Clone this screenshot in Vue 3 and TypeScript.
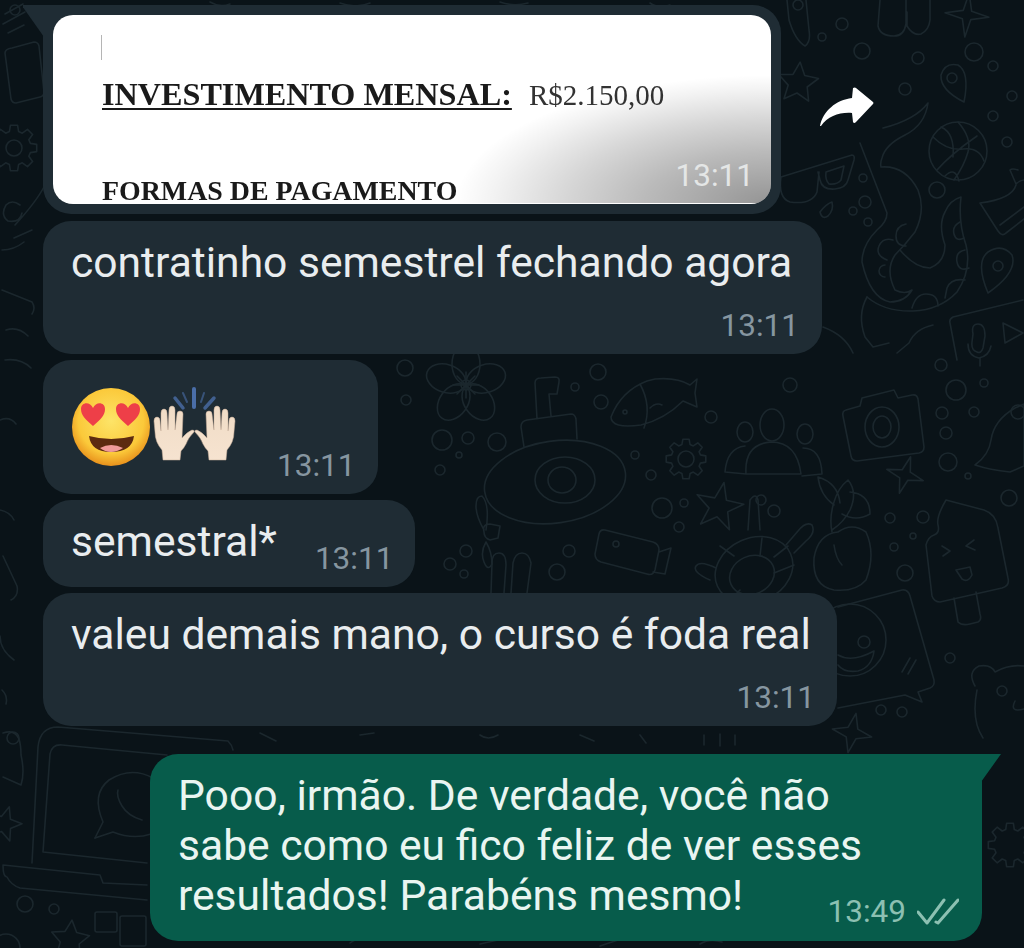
<script setup lang="ts">
interface TextMsg {
  id: number;
  text: string;
  time: string;
  cls: string;
}

const received: TextMsg[] = [
  { id: 1, text: "semestral*", time: "13:11", cls: "inline" },
  { id: 2, text: "valeu demais mano, o curso é foda real", time: "13:11", cls: "stacked wide" },
];

const sentLines: string[] = [
  "Pooo, irmão. De verdade, você não",
  "sabe como eu fico feliz de ver esses",
  "resultados! Parabéns mesmo!",
];

// doodle helpers, the wallpaper is all thin outlines
const starPath = (cx: number, cy: number, R: number, r: number, n: number, rot = 0): string => {
  let d = "";
  for (let i = 0; i < n * 2; i++) {
    const rad = i % 2 ? r : R;
    const a = rot + (Math.PI * i) / n - Math.PI / 2;
    d += `${i ? "L" : "M"}${(cx + rad * Math.cos(a)).toFixed(1)} ${(cy + rad * Math.sin(a)).toFixed(1)}`;
  }
  return d + "Z";
};

const gearPath = (cx: number, cy: number, r1: number, r2: number, n: number): string => {
  let d = "";
  for (let i = 0; i < n; i++) {
    const a = (Math.PI * 2 * i) / n;
    const w = Math.PI / n / 2;
    const pts = [
      [r1, a - w * 1.4],
      [r2, a - w * 0.8],
      [r2, a + w * 0.8],
      [r1, a + w * 1.4],
    ];
    for (const [rad, t] of pts) {
      d += `${d ? "L" : "M"}${(cx + rad * Math.cos(t)).toFixed(1)} ${(cy + rad * Math.sin(t)).toFixed(1)}`;
    }
  }
  return d + "Z";
};

const stars: string[] = [
  starPath(719, 507, 25, 10, 5, 0.2),
  starPath(905, 475, 19, 6, 4, 0.3),
  starPath(798, 83, 21, 10, 5, 0.1),
  starPath(967, 15, 22, 6, 4, 0.1),
  starPath(852, 733, 20, 7, 4, 0.2),
  starPath(4, 824, 18, 8, 5, 0.3),
  starPath(70, 940, 20, 10, 5, 0.1),
];

const gears: string[] = [
  gearPath(686, 459, 15, 20, 8),
  gearPath(14, 148, 17, 23, 8),
  gearPath(1010, 845, 16, 22, 8),
];

const bubbles: [number, number, number][] = [
  [442, 440, 10], [468, 438, 6], [497, 442, 9], [459, 455, 3], [440, 470, 5], [406, 400, 5],
  [405, 368, 8], [575, 387, 4], [598, 372, 8], [601, 402, 7], [635, 455, 4], [651, 475, 5],
  [662, 508, 10], [684, 503, 4], [679, 527, 5], [711, 417, 6], [761, 500, 5], [774, 511, 6],
  [790, 385, 7], [941, 365, 6], [956, 390, 10], [984, 383, 4], [942, 413, 6], [974, 412, 5],
  [946, 433, 6], [948, 462, 9], [968, 476, 3], [1009, 498, 8], [890, 518, 5], [923, 517, 6],
  [894, 547, 4], [913, 536, 3], [905, 573, 8], [466, 551, 6], [450, 564, 6], [464, 574, 4],
  [569, 551, 6], [557, 572, 8], [950, 658, 5], [881, 710, 5], [902, 712, 5], [798, 5, 5],
  [842, 24, 6], [822, 37, 4], [862, 51, 8], [918, 58, 6], [974, 52, 9], [993, 66, 5],
  [905, 89, 6], [1012, 96, 5], [993, 116, 5], [1007, 142, 5], [863, 178, 4], [865, 202, 6],
  [853, 211, 4], [868, 222, 4], [937, 190, 8], [25, 904, 8], [54, 909, 5], [13, 738, 6],
  [15, 10, 5], [6, 948, 14],
];
</script>

<template>
  <main class="chat">
    <svg class="wallpaper" viewBox="0 0 1024 948" width="1024" height="948" fill="none" stroke="#1b272d" stroke-width="1.6" stroke-linecap="round" stroke-linejoin="round">
      <circle v-for="(b, i) in bubbles" :key="i" :cx="b[0]" :cy="b[1]" :r="b[2]" />
      <path v-for="s in stars" :key="s" :d="s" />
      <path v-for="g in gears" :key="g" :d="g" />
      <circle cx="686" cy="459" r="8" />
      <circle cx="14" cy="148" r="8" />

      <!-- flower -->
      <ellipse v-for="a in [0, 72, 144, 216, 288]" :key="a" cx="466" cy="364" rx="14" ry="20" :transform="`rotate(${a} 466 385)`" />
      <circle cx="466" cy="385" r="5" />
      <path d="M466 372v26M453 385h26M457 376l18 18M475 376l-18 18" />

      <!-- submarine -->
      <ellipse cx="555" cy="482" rx="71" ry="41" transform="rotate(-8 555 482)" />
      <ellipse cx="565" cy="480" rx="30" ry="23" />
      <ellipse cx="562" cy="480" rx="14" ry="13" />
      <path d="M524 447l-3-20q0-6 6-7l44-6q4 0 5 5l1 20M537 419l-2-36q0-5 6-5l14-1q5 0 4 5l-2 12h-8l2 22" />
      <path d="M484 532q-2-8 6-8l10 2-2 12-8 2q-6-2-6-8zM484 530q-8-14-8-24t6-10q8 8 4 34M486 542q-6 10-2 20t8 2q0-12-6-22" />

      <!-- fish -->
      <path d="M611 417q10-26 36-36l8-2q22-2 35 6l7-6-2 14 2 14-14-6q-18 18-42 24-30 4-30-8zM640 384q12 22 4 44" />
      <path d="M650 408q6-6 12-3" />
      <circle cx="625" cy="412" r="2" />

      <!-- people -->
      <ellipse cx="772" cy="425" rx="12" ry="16" />
      <ellipse cx="745" cy="432" rx="8" ry="10" />
      <ellipse cx="805" cy="434" rx="8" ry="10" />
      <path d="M746 474q-2-30 25-32 26 0 30 32zM745 446q-18 2-20 26l21 2M803 448q18 0 19 26l-20 2" />

      <!-- camera -->
      <path d="M846 410l14-4 2-8 32-8 4 8 14-3q5-1 6 4l6 48q0 5-5 6l-62 8q-5 0-6-5l-8-40q-1-5 3-6z" />
      <ellipse cx="882" cy="427" rx="17" ry="20" />
      <ellipse cx="882" cy="427" rx="9" ry="11" />

      <!-- bell -->
      <path d="M975 465q14-10 16-25 3-20 24-32l9-4v62l-14 6q-20-2-35-7z" />
      <circle cx="1018" cy="412" r="7" />

      <!-- plant and cherry -->
      <path d="M832 532q-3-14 2-30 4-14 14-22 10 12 2 30-6 12-18 20M834 505q-14-10-16-28 20 6 22 26M850 492q20 2 20 22-14 8-28 0" />
      <path d="M838 532q-20 2-24 26-2 28 20 32 22 2 32-10 10-26 0-48-14-10-28 0" />
      <path d="M834 545q2 14 8 20" />

      <!-- ice cream -->
      <path d="M926 545q2-8 8-10 6-2 4-10t8-25l38 10q12 4 14 18l10 50q2 8-6 10l-62 14q-6 0-8-6zM954 598l4 24q4 4 12 2l8-2q4-2 2-8l-4-22" />
      <path d="M942 546l8 5-7 5M974 540l-8 6 9 4M956 570l14-3 2 8q-4 8-10 4z" />

      <!-- video camera -->
      <path d="M605 530l48 12q6 2 6 8l-4 20q-2 6-8 4l-46-12q-6-2-6-8l4-20q1-5 6-4zM659 552l12-4-6 26-12-2" />
      <circle cx="616" cy="544" r="3" />

      <!-- turtle -->
      <ellipse cx="754" cy="570" rx="40" ry="32" transform="rotate(-24 754 570)" />
      <ellipse cx="752" cy="575" rx="23" ry="19" transform="rotate(-24 752 575)" />
      <path d="M720 546l14 10M762 538l-2 18M788 546l-14 11M794 565l-20 8M730 600l10-10M762 608l-2-14M786 545l12-14q8-10 14-6 4 8-6 16l-12 12M748 530l2-30q6-8 8 0l2 30M716 568q-16-8-20-2t14 14" />

      <!-- fingers -->
      <path d="M491 593l1-30q0-10 7-10t7 12l-2 28M511 593l2-30q2-10 9-10t9 10l-4 30" />

      <!-- chat bubble with face -->
      <path d="M838 607l64-17q6-1 8 6l24 84q1 6-4 8l-12 4 4 10-17-7-67 13" />
      <circle cx="850" cy="640" r="36" />
      <path d="M838 655q14 8 36-4-2 16-16 20-14 2-20-6" />
      <circle cx="864" cy="642" r="6" />
      <path d="M902 672l8-14M908 674l8-14" />

      <!-- bear -->
      <path d="M975 686q-8-14 4-20 12-2 16 6 14-8 29-6M977 690q-6 30 6 48" />
      <circle cx="1002" cy="691" r="5" />
      <path d="M1015 701q-6 12 9 8" />

      <!-- laptop with logo -->
      <path d="M32 863l6-116q2-20 20-20l170 14q4 4 5 9" />
      <path d="M43 852l7-98q2-10 12-9l105 10M43 852l104 11M3 865l97 10 3 8 44 2M3 865q0 12 4 12 4 8 13 11l127 12" />
      <path d="M95 838l8-16q-12-28 6-42 22-14 44-2" />
      <path d="M118 790q-2 6 4 16t20 14" />
      <path d="M95 838l18-6q20 8 38 2" />
      <rect x="95" y="912" width="22" height="20" rx="2" />
      <rect x="120" y="916" width="26" height="30" rx="2" />
      <path d="M3 733q12-4 16 6 2 6 2 16 4 18 0 30l-18-8" />

      <!-- basketball -->
      <circle cx="958" cy="151" r="29" />
      <path d="M933 137q14 14 30 12t21 12M958 122q14 16 10 30t-14 28M937 170q14-16 40-34M945 176q10-10 14 5M941 127q14 6 12 30" />

      <!-- glasses -->
      <path d="M781 177l71-22q3 0 2 5l-6 20q-2 8-13 9-13 1-15-9l-2-8M781 177q-3 21 9 25 22 3 27-10l2-20" />
      <path d="M826 172l18-6-3 14q-4 5-12 4-4-4-3-12z" />
      <path d="M820 212q6-8 12-10 2 8-4 14-6 4-8-4z" />

      <!-- pins -->
      <path d="M988 293q-13-31 0-41 14-9 24 3 6 17-24 38z" />
      <circle cx="998" cy="266" r="5" />
      <path d="M964 102q-24-12-23-27 4-13 17-10 12 7 6 37z" />
      <circle cx="952" cy="78" r="5" />

      <!-- monster -->
      <path d="M883 128Q915 120 928 103Q925 125 905 135Q885 145 882 158Q880 163 881 167Q905 165 918 190Q926 210 915 232Q905 245 895 255Q885 270 895 290Q905 295 912 290Q905 302 890 302Q870 298 862 262Q862 245 877 230Q887 222 887 213L860 143" />
      <path d="M900 250Q915 268 930 268Q945 262 945 245Q938 225 945 212Q950 200 961 197Q958 222 966 245Q972 270 957 292Q940 310 913 311Q885 312 867 297" />
      <path d="M906 224q-10 2-10 12t10 10M893 240q-10-3-14 6t8 14M885 265a6 6 0 1 0 0 12M960 222q-8 4-6 12t10 4M965 250q-10 2-8 12t12 6M965 280q-14-2-18 8l-2 10M912 308q4-14 14-14 12 0 12 12" />
      <path d="M867 297q-10 18-2 40l8 10 16-4M933 325q-18 4-24 18l-12 10M823 327q22 8 30 26" />
      <path d="M1018 170q-6-2-8 0l6 14q4-4 8-4M1016 185q-4 14-36 18l18 28q4 6 8 2l18-14M1000 225l24-18" />

      <!-- mic and play card -->
      <path d="M953 317l70-17M953 317q-4 2-3 6l7 37" />
      <path d="M973 334q-2-10 5-10t7 12l-2 12q-2 6-6 4-6-2-5-10zM980 358v8M968 344q0 12 11 14 10-2 12-12M1003 323l20 10-18 10z" />

      <!-- top fingers -->
      <path d="M787 0l2 20q6 20 16 26 6-4 4-16L806 0M880 0l-2 26q2 10 16 10 10 0 12-12V0M907 12l0 14q6 10 14 8 8-4 9-14V0" />

      <!-- left side -->
      <path d="M12 48l22-6q4 0 5 4l5 46q0 4-4 5l-24 6q-4 0-5-4l-6-46q0-4 7-5zM5 14l18-10M3 24l22-12M8 33l16-8" />
      <path d="M20 205q-8-6-14 0-6 10 2 16 12 2 14-8M45 185q-8 16-30 40M32 230l-18 8M2 250q12 0 22-8" />
      <path d="M2 290l30 12q4 6 0 12M6 330q12-4 22 6M5 360q16-2 26 8M0 420q10-4 16 4" />
      <path d="M3 556l14 30q2 10-6 14M0 510q10 2 14 10M14 660q-14-10-14-24M2 690q6 6 4 14" />

      <!-- edges showing between bubbles -->
      <path d="M210 2q10 6 20 2M340 3q16 6 30 0M500 2q14 5 28 1M650 3q8 6 20 2" />
      <path d="M260 733l16 8M360 735l14-2M704 735v10M720 734v12M735 735v10M480 735q8 6 18 0M580 735l14 6M640 735l6 8" />
      <path d="M350 943q10-8 26-4M480 944l18-4M600 946l18-6M700 944q10-6 22-2" />
    </svg>

    <section class="row row-image">
      <div class="bubble bubble-in tail-in bubble-image">
        <div class="doc">
          <span class="doc-mark"></span>
          <p class="doc-price"><b>INVESTIMENTO MENSAL:</b> <span>R$2.150,00</span></p>
          <p class="doc-forms">FORMAS DE PAGAMENTO</p>
          <div class="doc-shade"></div>
          <span class="time time-image">13:11</span>
        </div>
      </div>
      <svg class="forward" width="54" height="40" viewBox="0 0 54 40">
        <path fill="#fff" d="M0 39C3 24 16 13 32 11L33 1Q35 0 36 1L53 15Q54 16 53 17L36 35Q34 37 33 35L32 26C20 25 8 29 1 39Z" />
      </svg>
    </section>

    <div class="bubble bubble-in stacked first">
      <span class="msg">contratinho semestrel fechando agora</span>
      <span class="time">13:11</span>
    </div>

    <div class="bubble bubble-in bubble-emoji">
      <svg width="166" height="82" viewBox="0 0 166 82">
        <defs>
          <radialGradient id="face" cx="50%" cy="42%" r="58%">
            <stop offset="0%" stop-color="#fde468" />
            <stop offset="72%" stop-color="#fbc93a" />
            <stop offset="100%" stop-color="#e8911c" />
          </radialGradient>
          <linearGradient id="palm" x1="0" y1="0" x2="0" y2="1">
            <stop offset="0%" stop-color="#f0dcc6" />
            <stop offset="100%" stop-color="#f6e3d0" />
          </linearGradient>
        </defs>
        <circle cx="41" cy="41" r="39" fill="url(#face)" />
        <path fill="#ee3f48" d="M0 12C-8 5-12 1-12-5C-12-12-3-13 0-6C3-13 12-12 12-5C12 1 8 5 0 12Z" transform="translate(23 28)" />
        <path fill="#ee3f48" d="M0 12C-8 5-12 1-12-5C-12-12-3-13 0-6C3-13 12-12 12-5C12 1 8 5 0 12Z" transform="translate(58 28)" />
        <path fill="#5c2a10" d="M19 50Q41 56 64 50Q62 66 41 66Q21 66 19 50Z" />
        <path fill="#f09a9a" d="M30 62Q41 56 53 62Q47 66 41 66Q35 66 30 62Z" />
        <g fill="url(#palm)" stroke="#c6ad98" stroke-width=".5">
          <path d="M93 74L92 64Q85 56 85 46L84 35Q84 31 87 31Q90 31 90 35L91 45L91 27Q91 23 94 23Q97 23 97 27L98 44L99 24Q99 20 102 20Q105 20 105 24L105 44L107 28Q107 25 110 25Q113 25 113 28L112 52Q117 46 122 44Q125 44 124 46Q118 52 116 58Q114 62 111 65L110 74Z" />
          <path transform="translate(249 0) scale(-1 1)" d="M93 74L92 64Q85 56 85 46L84 35Q84 31 87 31Q90 31 90 35L91 45L91 27Q91 23 94 23Q97 23 97 27L98 44L99 24Q99 20 102 20Q105 20 105 24L105 44L107 28Q107 25 110 25Q113 25 113 28L112 52Q117 46 122 44Q125 44 124 46Q118 52 116 58Q114 62 111 65L110 74Z" />
        </g>
        <g stroke="#4a6ea8" stroke-linecap="round" fill="none">
          <path stroke-width="4" d="M124 3v18" />
          <path stroke-width="3.5" d="M113 22l-8-10M135 22l9-10" opacity=".8" />
          <path stroke-width="2" d="M117 16l-4-9M131 16l3-9" opacity=".6" />
        </g>
      </svg>
      <span class="time">13:11</span>
    </div>

    <div v-for="m in received" :key="m.id" class="bubble bubble-in" :class="m.cls">
      <span class="msg">{{ m.text }}</span>
      <span class="time">{{ m.time }}</span>
    </div>

    <div class="bubble bubble-out tail-out">
      <span v-for="line in sentLines" :key="line" class="msg msg-out">{{ line }}</span>
      <div class="meta-out">
        <span class="time time-out">13:49</span>
        <svg width="42" height="30" viewBox="0 0 42 30" fill="none" stroke="#8cc0b2" stroke-width="3" stroke-linecap="round" stroke-linejoin="round">
          <path d="M1 15l9 11L27 3M19 25l2 1L41 3" />
        </svg>
      </div>
    </div>
  </main>
</template>

<style scoped>
.chat {
  position: relative;
  width: 1024px;
  height: 948px;
  overflow: hidden;
  background: #0a1318;
  font-family: Roboto, "Liberation Sans", sans-serif;
  display: flex;
  flex-direction: column;
  align-items: flex-start;
  padding: 5px 0 0 43px;
  box-sizing: border-box;
}
.wallpaper {
  position: absolute;
  top: 0;
  left: 0;
}
.row {
  position: relative;
  display: flex;
  align-items: center;
}
.row-image {
  margin-bottom: 7px;
}
.bubble {
  position: relative;
  box-sizing: border-box;
  border-radius: 28px;
  margin-bottom: 6px;
}
.bubble-in {
  background: #1f2c34;
}
.bubble-image {
  padding: 10px;
  margin-bottom: 0;
  border-top-left-radius: 0;
}
.tail-in::before {
  content: "";
  position: absolute;
  top: 0;
  left: -20px;
  width: 21px;
  height: 32px;
  background: #1f2c34;
  clip-path: polygon(0 0, 100% 0, 100% 100%, 0 7%);
}
.doc {
  position: relative;
  width: 718px;
  height: 189px;
  background: #fff;
  border-radius: 20px;
  overflow: hidden;
  font-family: "Liberation Serif", serif;
  color: #1a1a1a;
}
.doc p {
  filter: blur(0.4px);
}
.doc-mark {
  position: absolute;
  top: 20px;
  left: 48px;
  width: 1px;
  height: 25px;
  background: #b5b5b5;
}
.doc-price {
  margin: 0;
  padding: 60px 0 0 49px;
  font-size: 32.2px;
  line-height: 38px;
  white-space: nowrap;
}
.doc-price b {
  text-decoration: underline;
  text-decoration-thickness: 2px;
  text-underline-offset: 3px;
}
.doc-price span {
  margin-left: 9px;
  font-size: 29px;
  color: #333;
}
.doc-forms {
  margin: 64px 0 0 49px;
  font-size: 27.9px;
  font-weight: bold;
  line-height: 26px;
  white-space: nowrap;
}
.doc-shade {
  position: absolute;
  inset: 0 0 1px 0;
  background: radial-gradient(315px 128px at 100% 100%, rgba(0, 0, 0, 0.42) 0%, rgba(0, 0, 0, 0.27) 40%, rgba(0, 0, 0, 0.16) 65%, rgba(0, 0, 0, 0.05) 88%, rgba(0, 0, 0, 0) 100%);
}
.time {
  font-family: Roboto, "Liberation Sans", sans-serif;
  font-size: 31.5px;
  line-height: 34px;
  color: #8696a0;
  white-space: nowrap;
}
.time-image {
  position: absolute;
  right: 17px;
  bottom: 11px;
  color: #e4e6e6;
}
.forward {
  margin-left: 39px;
  margin-top: -6px;
  flex: none;
}
.msg {
  font-size: 42.6px;
  line-height: 48px;
  color: #e9edef;
  white-space: nowrap;
}
.stacked {
  display: flex;
  flex-direction: column;
  align-items: flex-end;
  height: 133px;
  padding: 17px 23px 0 28px;
}
.stacked.first {
  width: 779px;
}
.stacked.wide {
  width: 794px;
  padding-right: 22px;
}
.stacked .msg {
  align-self: flex-start;
}
.stacked .time {
  margin-top: 23px;
}
.inline {
  display: flex;
  align-items: flex-start;
  gap: 38px;
  height: 87px;
  padding: 17px 22px 0 28px;
}
.inline .time {
  margin-top: 25px;
}
.bubble-emoji {
  display: flex;
  align-items: flex-end;
  width: 335px;
  height: 134px;
  padding: 0 25px 11px 27px;
  gap: 41px;
}
.bubble-emoji svg {
  flex: none;
  margin-bottom: 15px;
}
.bubble-emoji .time {
  margin-left: auto;
}
.bubble-out {
  align-self: flex-start;
  width: 832px;
  height: 187px;
  margin: 22px 0 0 107px;
  padding: 16px 24px 0 28px;
  background: #075c4b;
  border-top-right-radius: 0;
}
.tail-out::after {
  content: "";
  position: absolute;
  top: 0;
  right: -19px;
  width: 20px;
  height: 28px;
  background: #075c4b;
  clip-path: polygon(0 0, 100% 0, 0 100%);
}
.msg-out {
  display: block;
  width: fit-content;
  line-height: 50px;
  color: #e9f5f1;
}
.meta-out {
  position: absolute;
  right: 23px;
  bottom: 12px;
  display: flex;
  align-items: center;
  gap: 11px;
}
.time-out {
  color: #8cc0b2;
}
</style>
